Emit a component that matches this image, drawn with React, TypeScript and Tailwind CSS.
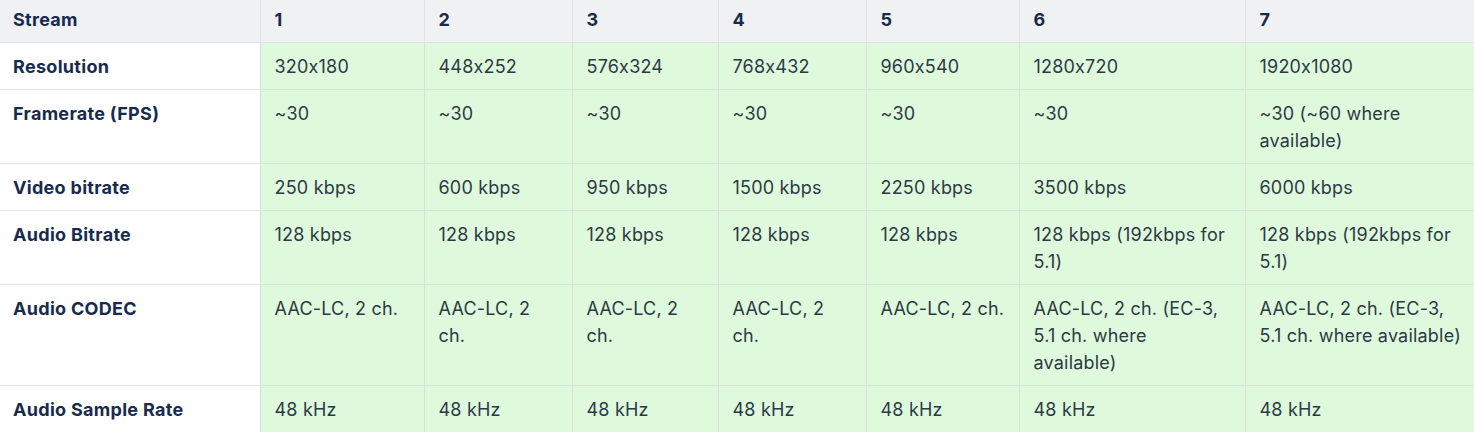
const columns = ["1", "2", "3", "4", "5", "6", "7"];

const widths = ["w-[260px]", "w-[164px]", "w-[148px]", "w-[146px]", "w-[148px]", "w-[153px]", "w-[226px]", "w-[229px]"];

const rows = [
  {
    label: "Resolution",
    values: ["320x180", "448x252", "576x324", "768x432", "960x540", "1280x720", "1920x1080"],
  },
  {
    label: "Framerate (FPS)",
    values: ["~30", "~30", "~30", "~30", "~30", "~30", "~30 (~60 where available)"],
  },
  {
    label: "Video bitrate",
    values: ["250 kbps", "600 kbps", "950 kbps", "1500 kbps", "2250 kbps", "3500 kbps", "6000 kbps"],
  },
  {
    label: "Audio Bitrate",
    values: [
      "128 kbps",
      "128 kbps",
      "128 kbps",
      "128 kbps",
      "128 kbps",
      "128 kbps (192kbps for 5.1)",
      "128 kbps (192kbps for 5.1)",
    ],
  },
  {
    label: "Audio CODEC",
    values: [
      "AAC-LC, 2 ch.",
      "AAC-LC, 2 ch.",
      "AAC-LC, 2 ch.",
      "AAC-LC, 2 ch.",
      "AAC-LC, 2 ch.",
      "AAC-LC, 2 ch. (EC-3, 5.1 ch. where available)",
      "AAC-LC, 2 ch. (EC-3, 5.1 ch. where available)",
    ],
  },
  {
    label: "Audio Sample Rate",
    values: ["48 kHz", "48 kHz", "48 kHz", "48 kHz", "48 kHz", "48 kHz", "48 kHz"],
  },
];

export default function App() {
  return (
    <div className="w-[1474px] h-[432px] overflow-hidden bg-white font-['Inter','Liberation_Sans',sans-serif] [font-feature-settings:'calt'_0] text-[18px] leading-[27px]">
      <table className="table-fixed border-collapse w-[1474px]">
        <colgroup>
          {widths.map((w, i) => (
            <col key={i} className={w} />
          ))}
        </colgroup>
        <thead>
          <tr className="bg-[#f0f1f2]">
            <th className="text-left align-top font-bold tracking-[0.3px] text-[#172b4d] pl-[13px] pr-[12px] pt-[6px] pb-[9px] border-b border-[#dfe1e5]">
              Stream
            </th>
            {columns.map((c) => (
              <th
                key={c}
                className="text-left align-top font-bold text-[#172b4d] pl-[14px] pr-[12px] pt-[6px] pb-[9px] border border-t-0 border-[#dfe1e5]"
              >
                {c}
              </th>
            ))}
          </tr>
        </thead>
        <tbody>
          {rows.map((row) => (
            <tr key={row.label}>
              <td className="align-top font-bold tracking-[0.3px] text-[#172b4d] bg-white pl-[13px] pr-[12px] pt-[10px] pb-[9px] border-b border-[#e4e5e8]">
                {row.label}
              </td>
              {row.values.map((v, i) => (
                <td
                  key={i}
                  className="align-top tracking-[0.2px] text-[#2c3a44] bg-[#dff9dd] pl-[14px] pr-[12px] pt-[10px] pb-[9px] border border-[#d6e2d4]"
                >
                  {v}
                </td>
              ))}
            </tr>
          ))}
        </tbody>
      </table>
    </div>
  );
}
